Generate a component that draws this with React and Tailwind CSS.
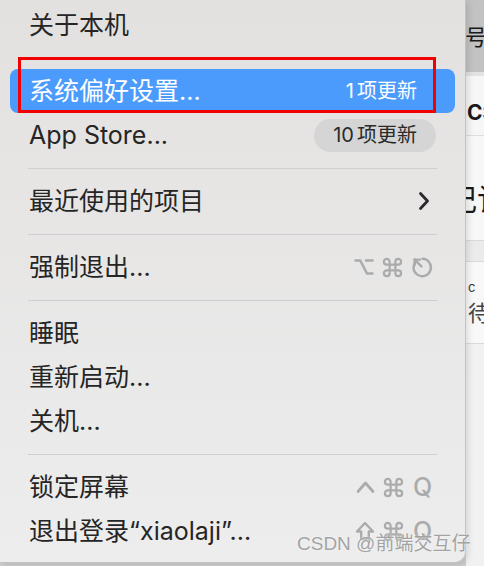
import React from "react";

const Sep = () => (
  <div className="h-[22px] flex items-center px-[18px]">
    <div className="h-px w-full bg-[#cfcfcf]" />
  </div>
);

const Row = ({ children, right, active }) => (
  <div
    className={
      "h-[44px] flex items-center justify-between pl-[19px] pr-[19px] text-[25px] leading-none " +
      (active ? "bg-[#4b9bfd] text-white rounded-[8px]" : "text-[#252525]")
    }
  >
    <span>{children}</span>
    {right}
  </div>
);

const G = "#ababab";

const Opt = () => (
  <svg width="20" height="18" viewBox="0 0 20 18" fill="none" stroke={G} strokeWidth="2.5" strokeLinecap="round" strokeLinejoin="round">
    <path d="M1.5 2.5 H6.3 L13 15.5 H18.5" />
    <path d="M12 2.5 H18.5" />
  </svg>
);

const Cmd = () => (
  <svg width="23" height="23" viewBox="0 0 24 24" fill="none" stroke={G} strokeWidth="2.3" strokeLinecap="round" strokeLinejoin="round" className="-mx-[2px]">
    <path d="M15 6v12a3 3 0 1 0 3-3H6a3 3 0 1 0 3 3V6a3 3 0 1 0-3 3h12a3 3 0 1 0-3-3" />
  </svg>
);

const Shift = () => (
  <svg width="20" height="20" viewBox="0 0 20 20" fill="none" stroke={G} strokeWidth="2.4" strokeLinejoin="round">
    <path d="M10 2 L2 10.5 H6.2 V18 H13.8 V10.5 H18 Z" />
  </svg>
);

const EscIcon = () => (
  <svg width="23" height="23" viewBox="0 0 22 22" fill="none" stroke={G} strokeWidth="2.3" strokeLinecap="round" strokeLinejoin="round">
    <path d="M6 4.2 A8.3 8.3 0 1 0 11 2.7" />
    <path d="M3.5 3.5 L10 10" />
    <path d="M3.5 3.5 L3.5 8.5" />
    <path d="M3.5 3.5 L8.5 3.5" />
  </svg>
);

const Caret = () => (
  <svg width="19" height="14" viewBox="0 0 19 14" fill="none" stroke={G} strokeWidth="2.7" strokeLinecap="round" strokeLinejoin="round">
    <path d="M2 11.5 L9.5 3 L17 11.5" />
  </svg>
);

const Q = () => (
  <span className="w-[21px] flex justify-center text-[25px] font-medium leading-none text-[#ababab]">Q</span>
);

export default function App() {
  return (
    <div className="relative w-[484px] h-[566px] flex overflow-hidden bg-[#cfcfcf] font-['Inter','Noto_Sans_CJK_SC',sans-serif]">
      <div className="relative z-10 w-[466px] h-[563px] shrink-0 rounded-br-[11px] border-r border-b border-[#c3c3c3] bg-gradient-to-b from-[#e3e1e0] to-[#ededed] px-[10px] pt-[3px] shadow-[2px_2px_6px_rgba(0,0,0,0.12)]">
        <Row>关于本机</Row>
        <Sep />
        <Row
          active
          right={
            <span className="pr-[19px] flex items-center text-[20px] leading-none">
              <span>1</span>
              <span className="ml-[3px]">项更新</span>
            </span>
          }
        >
          系统偏好设置...
        </Row>
        <Row
          right={
            <span className="h-[33px] flex items-center rounded-full bg-[#d5d5d5] px-[19px] text-[20px] leading-none text-[#2a2a2a]">
              <span>10</span>
              <span className="ml-[3px]">项更新</span>
            </span>
          }
        >
          App Store...
        </Row>
        <Sep />
        <Row
          right={
            <svg width="12" height="20" viewBox="0 0 12 20" fill="none" stroke="#2a2a2a" strokeWidth="2.8" strokeLinecap="round" strokeLinejoin="round" className="mr-[6px]">
              <path d="M2.5 2.5 L9.5 10 L2.5 17.5" />
            </svg>
          }
        >
          最近使用的项目
        </Row>
        <Sep />
        <Row
          right={
            <span className="flex items-center gap-[9px] mr-[2px]">
              <Opt />
              <Cmd />
              <EscIcon />
            </span>
          }
        >
          强制退出...
        </Row>
        <Sep />
        <Row>睡眠</Row>
        <Row>重新启动...</Row>
        <Row>关机...</Row>
        <Sep />
        <Row
          right={
            <span className="flex items-center gap-[9px] mr-[3px]">
              <Caret />
              <Cmd />
              <Q />
            </span>
          }
        >
          锁定屏幕
        </Row>
        <Row
          right={
            <span className="flex items-center gap-[9px] mr-[3px]">
              <Shift />
              <Cmd />
              <Q />
            </span>
          }
        >
          退出登录“xiaolaji”...
        </Row>

        <div className="absolute left-[18px] top-[57px] w-[418px] h-[56px] border-[3px] border-[#f00000]" />
      </div>

      <div className="flex-1 flex flex-col overflow-hidden text-[#1a1a1a]">
        <div className="h-[72px] bg-[#c2c2c2] pt-[24px] overflow-hidden whitespace-nowrap">
          <span className="block ml-[-1px] text-[22px] leading-none font-['Noto_Sans_CJK_SC',sans-serif]">号</span>
        </div>
        <div className="h-[4px] bg-[#e2e2e2]" />
        <div className="h-[60px] bg-[#f6f6f6] border-b border-[#dedede] pt-[26px] overflow-hidden whitespace-nowrap">
          <span className="block ml-[1px] text-[21px] font-bold leading-none">CS</span>
        </div>
        <div className="h-[104px] bg-[#f7f7f7] pt-[46px] overflow-hidden whitespace-nowrap">
          <span className="block ml-[-19px] text-[30px] leading-none font-['Noto_Sans_CJK_SC',sans-serif]">记记</span>
        </div>
        <div className="h-[22px] bg-[#ebebeb] border-y border-[#d9d9d9]" />
        <div className="h-[82px] bg-[#f8f8f8] pt-[18px] overflow-hidden whitespace-nowrap border-b border-[#d9d9d9]">
          <span className="block ml-[2px] text-[13px] leading-[14px] text-[#333]">c</span>
          <span className="block ml-[2px] text-[22px] leading-none mt-[6px] text-[#444] font-['Noto_Sans_CJK_SC',sans-serif]">待</span>
        </div>
        <div className="flex-1 bg-[#f1f1f1]" />
      </div>

      <div className="absolute z-20 left-[297px] top-[534px] text-[19px] leading-none text-[#a3a3a3] whitespace-nowrap [text-shadow:0_0_2px_rgba(255,255,255,0.9)] font-['Liberation_Sans','Noto_Sans_CJK_SC',sans-serif]">
        CSDN @前端交互仔
      </div>
    </div>
  );
}
